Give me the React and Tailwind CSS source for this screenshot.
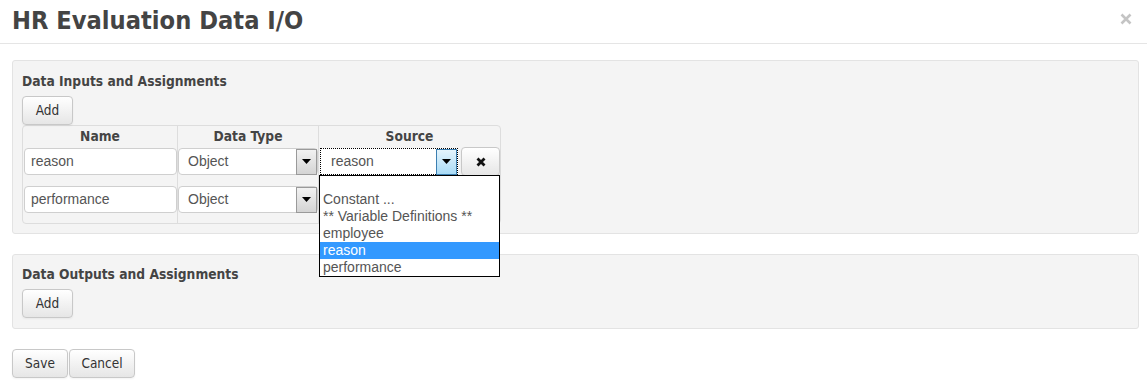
import { useState } from 'react'

const tahoma = "font-['DejaVu_Sans_Condensed','DejaVu_Sans',sans-serif] [font-stretch:condensed]"
const arial = "font-['Liberation_Sans',Arial,sans-serif]"

function Btn({ children, className = '' }) {
    return (
        <button
            className={`${tahoma} h-[29px] rounded-[4px] border border-[#c8c8c8] bg-gradient-to-b from-white to-[#e6e6e6] text-[13.5px] text-[#333] shadow-[inset_0_1px_0_rgba(255,255,255,0.2),0_1px_2px_rgba(0,0,0,0.05)] ${className}`}
        >
            {children}
        </button>
    )
}

function Arrow({ focused }) {
    return (
        <div
            className={`flex h-[26px] w-[21px] items-center justify-center border ${focused
                ? 'border-[#3c7fb1] bg-gradient-to-b from-[#e5f4fc] to-[#a9dbf6]'
                : 'border-[#9a9a9a] bg-gradient-to-b from-[#f2f2f2] to-[#d4d4d4]'
                }`}
        >
            <svg width="9" height="5" viewBox="0 0 9 5">
                <path d="M0 0h9L4.5 5z" fill="#000" />
            </svg>
        </div>
    )
}

function Select({ value, focused, className = '' }) {
    return (
        <div
            className={`${arial} flex h-[27px] items-center justify-between bg-white text-[14px] text-[#555] ${focused
                ? 'border border-dotted border-black'
                : 'rounded-[4px] border border-[#cfcfcf]'
                } ${className}`}
        >
            <span className={focused ? 'pl-[10px]' : 'pl-[9px]'}>{value}</span>
            <Arrow focused={focused} />
        </div>
    )
}

function TextInput({ value }) {
    return (
        <div
            className={`${arial} flex h-[27px] w-[153px] items-center rounded-[4px] border border-[#cfcfcf] bg-white pl-[6px] text-[14px] text-[#555]`}
        >
            {value}
        </div>
    )
}

const options = ['', 'Constant ...', '** Variable Definitions **', 'employee', 'reason', 'performance']

export default function App() {
    const [selected] = useState('reason')
    const rows = [
        { name: 'reason', type: 'Object', source: 'reason' },
        { name: 'performance', type: 'Object' },
    ]

    return (
        <div className="relative h-[390px] w-[1147px] overflow-hidden bg-white text-[#333]">
            {/* Header */}
            <div className="flex h-[44px] items-center justify-between border-b border-[#e5e5e5] pl-[12px] pr-[15px]">
                <h1 className={`${tahoma} -mt-[2px] text-[25.2px] font-bold leading-none text-[#444]`}>
                    HR Evaluation Data I/O
                </h1>
                <svg width="12" height="12" viewBox="0 0 12 12" className="mt-[-6px]">
                    <path d="M1.5 1.5l9 9M10.5 1.5l-9 9" stroke="#c4c4c4" strokeWidth="2.6" />
                </svg>
            </div>

            <div className="pl-[12px] pr-[8px] pt-[16px]">
                {/* Inputs panel */}
                <div className="rounded-[3px] border border-[#e3e3e3] bg-[#f4f4f4] px-[9px] pb-[9px] pt-[11px]">
                    <div className={`${tahoma} text-[13.7px] font-bold leading-[18px] text-[#444]`}>
                        Data Inputs and Assignments
                    </div>
                    <Btn className="mt-[6px] w-[51px]">Add</Btn>
                    <div className="w-[479px] rounded-[4px] border border-[#dddddd]">
                        <div className="grid grid-cols-[155px_141px_181px]">
                            <div className={`${tahoma} h-[22px] border-r border-[#dddddd] text-center text-[13.7px] font-bold leading-[20px] text-[#444]`}>Name</div>
                            <div className={`${tahoma} h-[22px] border-r border-[#dddddd] text-center text-[13.7px] font-bold leading-[20px] text-[#444]`}>Data Type</div>
                            <div className={`${tahoma} h-[22px] text-center text-[13.7px] font-bold leading-[20px] text-[#444]`}>Source</div>
                            {rows.map((r, i) => (
                                <div key={i} className="contents">
                                    <div className={`${i === 0 ? 'h-[38px]' : 'h-[37px]'} border-r border-[#dddddd] pl-[1px]`}>
                                        <TextInput value={r.name} />
                                    </div>
                                    <div className={`${i === 0 ? 'h-[38px]' : 'h-[37px]'} border-r border-[#dddddd]`}>
                                        <Select value={r.type} className="w-[140px]" />
                                    </div>
                                    <div className={`${i === 0 ? 'h-[38px]' : 'h-[37px]'} flex items-start gap-[3px] pl-[1px]`}>
                                        {r.source && (
                                            <>
                                                <Select value={r.source} focused className="w-[138px]" />
                                                <Btn className="-mt-px flex w-[39px] items-center justify-center">
                                                    <svg width="10" height="10" viewBox="0 0 10 10">
                                                        <path d="M1.5 1.5l7 7M8.5 1.5l-7 7" stroke="#111" strokeWidth="2.8" />
                                                    </svg>
                                                </Btn>
                                            </>
                                        )}
                                    </div>
                                </div>
                            ))}
                        </div>
                    </div>
                </div>

                {/* Outputs panel */}
                <div className="mt-[20px] rounded-[3px] border border-[#e3e3e3] bg-[#f4f4f4] px-[9px] pb-[10px] pt-[10px]">
                    <div className={`${tahoma} text-[13.7px] font-bold leading-[18px] text-[#444]`}>
                        Data Outputs and Assignments
                    </div>
                    <Btn className="mt-[6px] w-[51px]">Add</Btn>
                </div>

                <div className="mt-[20px] flex gap-[1px]">
                    <Btn className="w-[56px]">Save</Btn>
                    <Btn className="w-[66px]">Cancel</Btn>
                </div>
            </div>

            {/* Open dropdown list */}
            <div className={`${arial} absolute left-[319px] top-[175px] w-[181px] border border-black bg-white text-[14px] text-[#555]`}>
                {options.map((o, i) => (
                    <div
                        key={i}
                        className={`${i === 0 ? 'h-[15px]' : 'h-[17px]'} pl-[3px] leading-[17px] ${o === selected ? 'bg-[#3399ff] text-white' : ''}`}
                    >
                        {o}
                    </div>
                ))}
            </div>
        </div>
    )
}
